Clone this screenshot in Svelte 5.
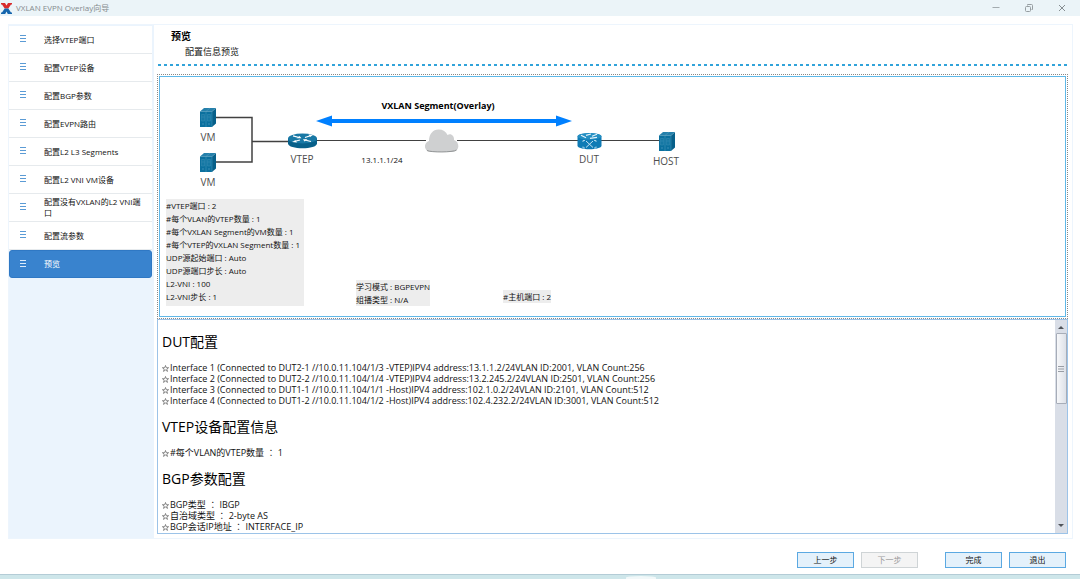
<script>
  const steps = [
    '选择VTEP端口',
    '配置VTEP设备',
    '配置BGP参数',
    '配置EVPN路由',
    '配置L2 L3 Segments',
    '配置L2 VNI VM设备',
    '配置没有VXLAN的L2 VNI端口',
    '配置流参数',
    '预览'
  ];
  let active = $state(8);

  const vtepInfo = [
    '#VTEP端口 : 2',
    '#每个VLAN的VTEP数量 : 1',
    '#每个VXLAN Segment的VM数量 : 1',
    '#每个VTEP的VXLAN Segment数量 : 1',
    'UDP源起始端口 : Auto',
    'UDP源端口步长 : Auto',
    'L2-VNI : 100',
    'L2-VNI步长 : 1'
  ];

  const sections = [
    {
      title: 'DUT配置',
      lines: [
        ['Interface 1 (Connected to DUT2-1 //10.0.11.104/1/3 -VTEP)IPV4 address:13.1.1.2/24VLAN ID:2001, VLAN Count:256'],
        ['Interface 2 (Connected to DUT2-2 //10.0.11.104/1/4 -VTEP)IPV4 address:13.2.245.2/24VLAN ID:2501, VLAN Count:256'],
        ['Interface 3 (Connected to DUT1-1 //10.0.11.104/1/1 -Host)IPV4 address:102.1.0.2/24VLAN ID:2101, VLAN Count:512'],
        ['Interface 4 (Connected to DUT1-2 //10.0.11.104/1/2 -Host)IPV4 address:102.4.232.2/24VLAN ID:3001, VLAN Count:512']
      ]
    },
    { title: 'VTEP设备配置信息', lines: [['#每个VLAN的VTEP数量', '1']] },
    {
      title: 'BGP参数配置',
      lines: [['BGP类型', 'IBGP'], ['自治域类型', '2-byte AS'], ['BGP会话IP地址', 'INTERFACE_IP']]
    }
  ];
</script>

{#snippet server(x, y)}
  <g transform="translate({x} {y})">
    <path d="M0 3.500 4 0H16L12 3.500Z" fill="#2580ab" />
    <path d="M12 3.500 16 0V15.500L12 19Z" fill="#07608a" />
    <path d="M0 3.500H12V19H0Z" fill="#0b709e" />
    <path d="M6 3.500V19M6 3.500 10 0M12 3.500V19M12 3.500 16 0" stroke="#5fa6c6" stroke-width=".4" fill="none" />
    <path d="M1.500 6.500H4.500V13H1.500ZM7.500 6.500H10.500V13H7.500ZM1.500 9H4.500M7.500 9H10.500M3 6.500V13M9 6.500V13" stroke="#4a98bd" stroke-width=".4" fill="none" />
    <path d="M2 16H4M8 16H10" stroke="#4a98bd" stroke-width=".8" />
  </g>
{/snippet}

<div class="window">
  <header class="titlebar">
    <svg class="logo" width="11" height="11" viewBox="0 0 11 11" aria-hidden="true">
      <path d="M0 0H4L5.500 2.500 7 0H11V1.500H10L7.300 5.500H3.700L1 1.500H0Z" fill="#d82c2c" />
      <path d="M3.700 5.500H7.300L10 9.500H11V11H6.800L5.500 8.500 4.200 11H0V9.500H1Z" fill="#1565ad" />
    </svg>
    <span class="caption">VXLAN EVPN Overlay向导</span>
    <button class="win" aria-label="最小化"><svg width="10" height="10" viewBox="0 0 10 10"><path d="M1.500 4.500H8.500" stroke="#a3abaf" fill="none" /></svg></button>
    <button class="win" aria-label="还原"><svg width="10" height="10" viewBox="0 0 10 10"><path d="M3.500 2.500V1.500H7.500Q8.500 1.500 8.500 2.500V6.500H7.500M2.500 3.500H5.500Q6.500 3.500 6.500 4.500V7.500Q6.500 8.500 5.500 8.500H2.500Q1.500 8.500 1.500 7.500V4.500Q1.500 3.500 2.500 3.500Z" stroke="#969ea2" fill="none" /></svg></button>
    <button class="win" aria-label="关闭"><svg width="10" height="10" viewBox="0 0 10 10"><path d="M2 2 8 8M8 2 2 8" stroke="#868e92" fill="none" /></svg></button>
  </header>

  <div class="frame">
    <nav class="sidebar">
      {#each steps as step, i}
        <button class="step" class:active={active === i} onclick={() => (active = i)}>
          <svg width="6" height="8" viewBox="0 0 6 8" aria-hidden="true"><path d="M0 .5H6M0 3.500H6M0 6.500H6" stroke="currentColor" /></svg>
          <span>{step}</span>
        </button>
      {/each}
    </nav>

    <main class="content">
      <div class="heading">
        <h1>预览</h1>
        <p>配置信息预览</p>
      </div>
      <svg class="rule" height="2" aria-hidden="true"><line x1="1" y1="1" x2="100%" y2="1" stroke="#31a3da" stroke-width="2" stroke-dasharray="3 3" /></svg>

      <div class="focus">
        <div class="canvas">
          <svg class="topology" width="100%" height="239">
            <g transform="translate(-160 -77)">
              <g stroke="#414141" stroke-width="1.500" fill="none">
                <path d="M215 117.500H252V162H215M252 141.500H289" />
                <path d="M316 140.500H426M457 140.500H578M601 140.500H660" stroke-width="1" />
              </g>
              <path d="M316 121 332 115.500V119H556V115.500L572 121 556 126.500V123H332V126.500Z" fill="#0080ff" />
              {@render server(200, 108)}
              {@render server(200, 153)}
              {@render server(659, 132)}

              <path d="M288 138.500V143.500C288 149.800 317 149.800 317 143.500V138.500Z" fill="#07608a" />
              <ellipse cx="302.500" cy="138.500" rx="14.500" ry="5" fill="#1878a5" />
              <path d="M293 135.800 299 137.500M300 140 294 141.500M305 137.500 311 135.500M305 140 311 141.500" stroke="#fff" stroke-width="1.200" fill="none" />
              <path d="M296.500 138.300 301.500 138.200 299.500 136ZM297 142.500 292 142 295.500 140.200ZM308.500 134.500 313 135 310 137ZM303 139.200 307.500 139.200 304.500 141.500Z" fill="#fff" />

              <path d="M430 152C424 151 423 143 429 141 429 134 433 129.500 438.500 129.500 443 129.500 446 131.500 447.500 135 451 133 454.500 136 454 140 460 142 460 151 453 152Z" fill="#cfd0d1" />
              <path d="M427 150.500C431 152.500 453 152.500 456.500 150" stroke="#929596" fill="none" />

              <path d="M577.500 136.500C577.500 132 601.500 132 601.500 136.500V145.500C601.500 150.500 577.500 150.500 577.500 145.500Z" fill="#0e7bb5" />
              <ellipse cx="589.500" cy="136.300" rx="12" ry="3.300" fill="#248fc3" />
              <path d="M581 135.300 586 137.800M592 136.300 597 134.300M586 135.300 591 134M590 138.300 597 137.300" stroke="#e5f3fa" stroke-width="1.200" />
              <path d="M586 141 593 147.500M593 141 586 147.500" stroke="#c2e2f2" fill="none" />
              <path d="M583 142V140.500H585M594 140.500H596V142M583 146.500V148H585M594 148H596V146.500" stroke="#b6dcef" stroke-width=".9" fill="none" />

              <g class="node" text-anchor="middle">
                <text x="208" y="141">VM</text>
                <text x="208" y="186">VM</text>
                <text x="302" y="163">VTEP</text>
                <text x="589" y="163">DUT</text>
                <text x="666" y="165">HOST</text>
              </g>
              <text class="segment" x="438" y="109" text-anchor="middle">VXLAN Segment(Overlay)</text>
              <text class="subnet" x="382" y="163" text-anchor="middle">13.1.1.1/24</text>
            </g>
          </svg>
          <div class="note vtep">
            {#each vtepInfo as line}<div>{line}</div>{/each}
          </div>
          <div class="note mode"><div>学习模式 : BGPEVPN</div><div>组播类型 : N/A</div></div>
          <div class="note host"><div>#主机端口 : 2</div></div>
        </div>
      </div>

      <div class="report">
        <div class="document">
          {#each sections as section}
            <h2>{section.title}</h2>
            {#each section.lines as [label, value]}
              <p><svg width="7" height="7" viewBox="0 0 7 7" aria-hidden="true"><path d="M3.500 .5 4.300 2.700H6.600L4.800 4.100 5.500 6.400 3.500 5 1.500 6.400 2.200 4.100 .4 2.700H2.700Z" fill="none" stroke="#444" stroke-width=".6" /></svg>{label}{#if value}{' '}<span class="colon">：</span>{' '}{value}{/if}</p>
            {/each}
          {/each}
        </div>
        <div class="scrollbar" aria-hidden="true">
          <svg width="6" height="4" viewBox="0 0 6 4"><path d="M0 4 3 1 6 4Z" fill="#50545a" /></svg>
          <div class="thumb"><svg width="6" height="6" viewBox="0 0 6 6"><path d="M0 .5H6M0 3H6M0 5.500H6" stroke="#989da5" /></svg></div>
          <svg width="6" height="4" viewBox="0 0 6 4"><path d="M0 0H6L3 3Z" fill="#50545a" /></svg>
        </div>
      </div>
    </main>
  </div>

  <footer>
    <button>上一步</button>
    <button disabled>下一步</button>
    <button class="finish">完成</button>
    <button>退出</button>
  </footer>
  <div class="taskbar"><span></span></div>
</div>

<style>
  :global(body) {
    margin: 0;
    background: #fff;
  }
  .window {
    display: flex;
    flex-direction: column;
    height: 100vh;
    color: #111;
    font: 8px/12px 'Open Sans', 'Noto Sans CJK SC', sans-serif;
  }
  .window :is(button) {
    font: inherit;
    box-sizing: border-box;
  }
  .titlebar {
    display: flex;
    align-items: center;
    height: 16px;
    padding: 0 2px 0 1px;
    background: #ebf4f8;
    color: #858b8e;
  }
  .logo { margin-right: 4px; }
  .caption { flex: 1; }
  .win {
    display: grid;
    place-items: center;
    width: 33px;
    height: 16px;
    padding: 0;
    border: 0;
    background: none;
  }
  .frame {
    display: flex;
    flex: 1;
    min-height: 0;
    margin: 8px 7px 0 8px;
    border: 1px solid #edf5fd;
  }
  .sidebar {
    width: 143px;
    padding: 1px 2px 0 0;
    background: #ebf4fd;
  }
  .step {
    display: flex;
    align-items: center;
    gap: 18px;
    width: 100%;
    height: 28px;
    padding: 0 4px 1px 11px;
    border: 0;
    border-bottom: 1px solid #e6eaed;
    background: #fff;
    color: #111;
    text-align: left;
  }
  .step svg {
    flex: none;
    color: #5b9bd5;
  }
  .step span { line-height: 11px; }
  .step.active {
    padding-left: 10px;
    border: 1px solid #2f78c4;
    border-radius: 3px;
    background: #3983ce;
    color: #fff;
  }
  .step.active svg { color: #dcebfa; }
  .content {
    display: flex;
    flex: 1;
    flex-direction: column;
    min-width: 0;
    padding: 4px 4px 4px 3px;
  }
  .heading {
    height: 35px;
    padding-left: 14px;
  }
  h1, h2, p { margin: 0; }
  h1 {
    color: #000;
    font-size: 10px;
    line-height: 14px;
  }
  .heading p {
    padding: 3px 0 0 14px;
    font-size: 9px;
  }
  .rule {
    display: block;
    width: 100%;
    margin-bottom: 8px;
  }
  .focus {
    padding: 1px;
    border: 1px dotted #888;
  }
  .canvas {
    position: relative;
    overflow: hidden;
    border: 1px solid #5fb8e8;
  }
  .topology { display: block; }
  .node {
    fill: #4d4d4d;
    font-size: 10px;
  }
  .segment {
    fill: #000;
    font-size: 9px;
    font-weight: 700;
  }
  .subnet {
    fill: #111;
    font-size: 8px;
  }
  .note {
    position: absolute;
    background: #ededed;
    line-height: 13px;
    white-space: nowrap;
  }
  .vtep {
    left: 6px;
    top: 122px;
    padding: 0 4px 3px 0;
  }
  .mode { left: 196px; top: 203px; }
  .host { left: 343px; top: 213px; }
  .report {
    display: flex;
    flex: 1;
    min-height: 0;
    border: 1px solid #9cc3e8;
  }
  .document {
    flex: 1;
    overflow: hidden;
    padding: 1px 4px 0;
    font-size: 9px;
    line-height: 11px;
  }
  h2 {
    padding: 12px 0 11px;
    color: #000;
    font-size: 14px;
    font-weight: 400;
    line-height: 18px;
  }
  .document p svg {
    margin-right: 1px;
    vertical-align: -1px;
  }
  .colon {
    font-family: 'Noto Sans CJK TC', sans-serif;
    line-height: 1;
  }
  .scrollbar {
    display: flex;
    flex-direction: column;
    align-items: center;
    width: 12px;
    padding: 5px 0;
    background: #d9dee7;
  }
  .thumb {
    display: grid;
    place-items: center;
    box-sizing: border-box;
    width: 11px;
    height: 71px;
    margin: 4px 0 auto;
    border: 1px solid #a7adb8;
    border-radius: 1px;
    background: linear-gradient(90deg, #f7f8fa, #dde1e8);
  }
  footer {
    display: flex;
    justify-content: flex-end;
    gap: 7px;
    padding: 13px 14px 6px;
  }
  footer button {
    width: 57px;
    height: 16px;
    padding: 0;
    border: 1px solid #5ba9e2;
    background: #e4f1fb;
    color: #111;
    font-size: 9px;
    line-height: 12px;
  }
  footer button:disabled {
    border-color: #cfd4d6;
    background: #f4f4f4;
    color: #9a9a9a;
  }
  .finish { margin-left: 20px; }
  .taskbar {
    height: 4px;
    border-top: 1px solid #b4ccd6;
    background: #cee6ea;
  }
  .taskbar span {
    display: block;
    width: 30px;
    height: 3px;
    margin: 1px auto 0 calc(50% + 86px);
    border-radius: 50% 50% 0 0;
    background: #f1f8f9;
  }
</style>
